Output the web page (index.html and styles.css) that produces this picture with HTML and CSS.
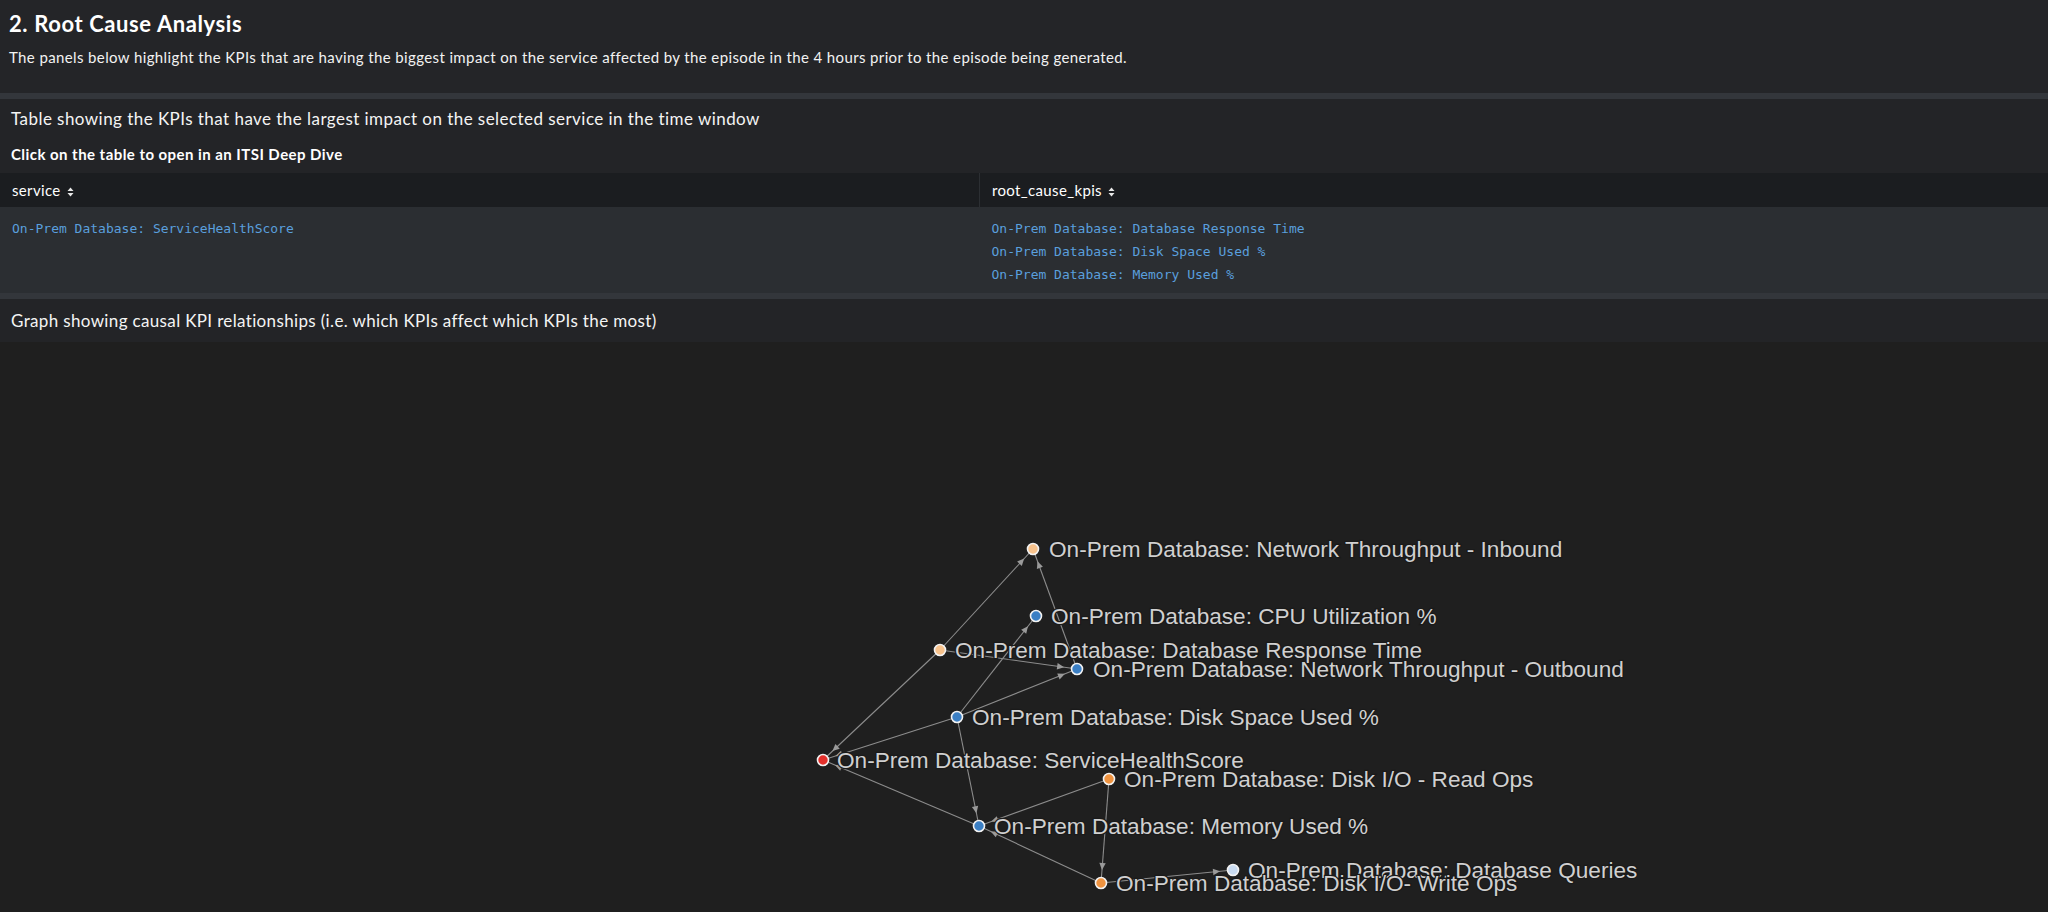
FILE: index.html
```html
<!DOCTYPE html>
<html>
<head>
<meta charset="utf-8">
<link rel="stylesheet" href="styles.css">
</head>
<body>
<div class="page">
  <section class="intro">
    <h2 class="intro-title">2. Root Cause Analysis</h2>
    <p class="intro-desc">The panels below highlight the KPIs that are having the biggest impact on the service affected by the episode in the 4 hours prior to the episode being generated.</p>
  </section>
  <div class="divider"></div>
  <section class="panel">
    <h3 class="panel-title">Table showing the KPIs that have the largest impact on the selected service in the time window</h3>
    <div class="panel-subtitle">Click on the table to open in an ITSI Deep Dive</div>
    <table class="kpi-table">
      <thead>
        <tr>
          <th class="col-service">service <svg class="sort" width="7" height="10" viewBox="0 0 7 10"><path d="M3.5 0.5 L6.5 4 L0.5 4 Z M3.5 9.5 L6.5 6 L0.5 6 Z" fill="#e8e8e8"/></svg></th>
          <th class="col-kpis">root_cause_kpis <svg class="sort" width="7" height="10" viewBox="0 0 7 10"><path d="M3.5 0.5 L6.5 4 L0.5 4 Z M3.5 9.5 L6.5 6 L0.5 6 Z" fill="#e8e8e8"/></svg></th>
        </tr>
      </thead>
      <tbody>
        <tr>
          <td class="col-service"><div class="mv">On-Prem Database: ServiceHealthScore</div></td>
          <td class="col-kpis">
            <div class="mv">On-Prem Database: Database Response Time</div>
            <div class="mv">On-Prem Database: Disk Space Used %</div>
            <div class="mv">On-Prem Database: Memory Used %</div>
          </td>
        </tr>
      </tbody>
    </table>
  </section>
  <div class="divider"></div>
  <section class="panel graph-panel">
    <h3 class="panel-title graph-title">Graph showing causal KPI relationships (i.e. which KPIs affect which KPIs the most)</h3>
    <div class="graph">
      <svg class="graph-svg" width="2048" height="570" viewBox="0 342 2048 570">
        <defs>
          <marker id="arrow" viewBox="-2 -4 30 8" markerUnits="userSpaceOnUse" markerWidth="30" markerHeight="8" refX="20" refY="0" orient="auto" overflow="visible">
            <path d="M0,-3.2 L7,0 L0,3.2 Z" fill="#9a9a9a"/>
          </marker>
        </defs>
        <g class="edges" stroke="#8c8c8c" stroke-width="1.1" fill="none">
          <line x1="940" y1="650" x2="1033" y2="549" marker-end="url(#arrow)"/>
          <line x1="940" y1="650" x2="823" y2="760" marker-end="url(#arrow)"/>
          <line x1="940" y1="650" x2="1077" y2="669" marker-end="url(#arrow)"/>
          <line x1="1077" y1="669" x2="1033" y2="549" marker-end="url(#arrow)"/>
          <line x1="957" y1="717" x2="1036" y2="616" marker-end="url(#arrow)"/>
          <line x1="957" y1="717" x2="1077" y2="669" marker-end="url(#arrow)"/>
          <line x1="957" y1="717" x2="823" y2="760" marker-end="url(#arrow)"/>
          <line x1="957" y1="717" x2="979" y2="826" marker-end="url(#arrow)"/>
          <line x1="979" y1="826" x2="823" y2="760" marker-end="url(#arrow)"/>
          <line x1="1109" y1="779" x2="979" y2="826" marker-end="url(#arrow)"/>
          <line x1="1109" y1="779" x2="1101" y2="883" marker-end="url(#arrow)"/>
          <line x1="1101" y1="883" x2="1233" y2="870" marker-end="url(#arrow)"/>
          <line x1="1101" y1="883" x2="979" y2="826" marker-end="url(#arrow)"/>
        </g>
        <g class="nodes" stroke="#f2f2f2" stroke-width="1.6">
          <circle cx="1033" cy="549" r="5.5" fill="#f7c28c"/>
          <circle cx="1036" cy="616" r="5.5" fill="#3b7fc4"/>
          <circle cx="940" cy="650" r="5.5" fill="#f7c28c"/>
          <circle cx="1077" cy="669" r="5.5" fill="#3b7fc4"/>
          <circle cx="957" cy="717" r="5.5" fill="#3b7fc4"/>
          <circle cx="823" cy="760" r="5.5" fill="#e4302b"/>
          <circle cx="1109" cy="779" r="5.5" fill="#ef9340"/>
          <circle cx="979" cy="826" r="5.5" fill="#3b7fc4"/>
          <circle cx="1233" cy="870" r="5.5" fill="#c9dbf1"/>
          <circle cx="1101" cy="883" r="5.5" fill="#ef9340"/>
        </g>
        <g class="labels">
          <text x="1049" y="557">On-Prem Database: Network Throughput - Inbound</text>
          <text x="1051" y="624">On-Prem Database: CPU Utilization %</text>
          <text x="955" y="658">On-Prem Database: Database Response Time</text>
          <text x="1093" y="677">On-Prem Database: Network Throughput - Outbound</text>
          <text x="972" y="725">On-Prem Database: Disk Space Used %</text>
          <text x="837" y="768">On-Prem Database: ServiceHealthScore</text>
          <text x="1124" y="787">On-Prem Database: Disk I/O - Read Ops</text>
          <text x="994" y="834">On-Prem Database: Memory Used %</text>
          <text x="1248" y="878">On-Prem Database: Database Queries</text>
          <text x="1116" y="891">On-Prem Database: Disk I/O- Write Ops</text>
        </g>
      </svg>
    </div>
  </section>
</div>
</body>
</html>
```

FILE: styles.css
```css
html, body {
  margin: 0;
  padding: 0;
}

body {
  background: #1f1f1f;
  color: #ffffff;
  font-family: Lato, "Open Sans", "Liberation Sans", sans-serif;
  width: 2048px;
  height: 912px;
  overflow: hidden;
}

.page {
  display: flex;
  flex-direction: column;
  height: 912px;
}

.intro {
  background: #242528;
  height: 94px;
  box-sizing: border-box;
  padding: 11px 9px 0;
}

.intro-title {
  margin: 0;
  font-size: 22px;
  line-height: 26px;
  font-weight: 700;
  letter-spacing: 0.6px;
  color: #ffffff;
}

.intro-desc {
  margin: 11px 0 0;
  font-size: 15px;
  line-height: 18px;
  letter-spacing: 0.38px;
  color: #f2f2f2;
}

.divider {
  height: 6px;
  background: #33363b;
  flex: none;
}

.panel {
  background: #232427;
  flex: none;
}

.panel-title {
  margin: 0;
  padding: 9px 11px 0;
  font-size: 17px;
  line-height: 22px;
  font-weight: 400;
  letter-spacing: 0.45px;
  color: #f4f4f4;
}

.panel-subtitle {
  padding: 15px 11px 0;
  font-size: 15px;
  line-height: 18px;
  font-weight: 700;
  letter-spacing: 0.45px;
  color: #ffffff;
  margin-bottom: 10px;
}

.kpi-table {
  width: 100%;
  border-collapse: collapse;
  table-layout: fixed;
}

.kpi-table th {
  background: #1b1d20;
  height: 34px;
  padding: 0 12px;
  text-align: left;
  font-size: 15px;
  font-weight: 400;
  letter-spacing: 0.35px;
  color: #ffffff;
  white-space: nowrap;
}

.kpi-table th.col-service {
  width: 955px;
  border-right: 1px solid #2c2f33;
}

.kpi-table th .sort {
  vertical-align: -1px;
  margin-left: 2px;
}

.kpi-table td {
  background: #2b2e32;
    vertical-align: top;
  padding: 10px 12px 7px;
  height: 69px;
}

.mv {
  font-family: "DejaVu Sans Mono", "Liberation Mono", monospace;
  font-size: 13px;
  line-height: 23px;
  color: #5a9fdd;
}

.graph-panel {
  flex: 1;
  display: flex;
  flex-direction: column;
  background: #1f1f1f;
}

.graph-title {
  background: #232427;
  padding: 11px 11px 10px;
  letter-spacing: 0.35px;
}

.graph {
  flex: 1;
  overflow: hidden;
}

.graph-svg {
  display: block;
}

.labels text {
  font-family: "Liberation Sans", Arial, sans-serif;
  font-size: 22.6px;
  fill: #d0d0d0;
  stroke: #1a1a1a;
  stroke-width: 2.5px;
  paint-order: stroke;
}
```
